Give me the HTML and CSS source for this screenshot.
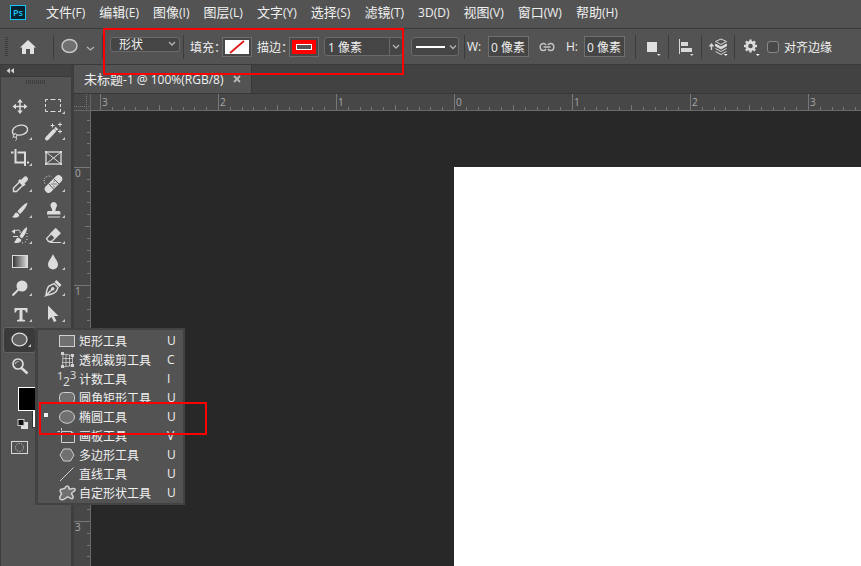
FILE: index.html
```html
<!DOCTYPE html>
<html lang="zh-CN">
<head>
    <meta charset="UTF-8">
    <meta name="viewport" content="width=device-width, initial-scale=1.0">
    <title>未标题-1</title>
    <link rel="stylesheet" href="styles.css">
</head>
<body>
    <nav class="menubar">
        <svg class="logo" width="16" height="15" viewBox="0 0 16 15">
            <rect x="0.5" y="0.5" width="15" height="14" fill="#06232f" stroke="#18c4f4"/>
            <text x="3" y="11" class="logo-text">Ps</text>
        </svg>
        <a href="#">文件<span class="key">(F)</span></a>
        <a href="#">编辑<span class="key">(E)</span></a>
        <a href="#">图像<span class="key">(I)</span></a>
        <a href="#">图层<span class="key">(L)</span></a>
        <a href="#">文字<span class="key">(Y)</span></a>
        <a href="#">选择<span class="key">(S)</span></a>
        <a href="#">滤镜<span class="key">(T)</span></a>
        <a href="#"><span class="key">3D(D)</span></a>
        <a href="#">视图<span class="key">(V)</span></a>
        <a href="#">窗口<span class="key">(W)</span></a>
        <a href="#">帮助<span class="key">(H)</span></a>
    </nav>

    <div class="options">
        <div class="seg seg-home">
            <span class="grip"></span>
            <button class="icon-btn" aria-label="主页">
                <svg width="18" height="16" viewBox="0 0 18 16"><path d="M9 1L17 8.5H15V15H11V10H7V15H3V8.5H1Z" fill="#e0e0e0"/></svg>
            </button>
        </div>
        <div class="seg seg-shape">
            <button class="icon-btn" aria-label="椭圆工具">
                <svg width="34" height="18" viewBox="0 0 34 18" fill="none">
                    <ellipse cx="8.500" cy="8" rx="7.5" ry="6.5" fill="#707070" stroke="#c8c8c8" stroke-width="1.4"/>
                    <path d="M26 9L29.500 12L33 9" stroke="#b4b4b4" stroke-width="1.3"/>
                </svg>
            </button>
        </div>
        <div class="seg seg-mode">
            <div class="drop">
                <select class="mode" aria-label="模式"><option>形状</option></select>
                <svg class="chev" width="8" height="6" viewBox="0 0 8 6"><path d="M1 1L4 4L7 1"/></svg>
            </div>
        </div>
        <div class="seg seg-paint">
            <span class="label">填充：</span>
            <button class="swatch" aria-label="填充">
                <svg width="24" height="14" viewBox="0 0 24 14"><rect width="24" height="14" fill="#fff"/><path d="M5 13L19 1" stroke="#e01818" stroke-width="1.8"/></svg>
            </button>
            <span class="label">描边：</span>
            <button class="swatch" aria-label="描边">
                <svg width="24" height="14" viewBox="0 0 24 14"><rect width="24" height="14" fill="#f00"/><rect x="4.500" y="4.500" width="15" height="5" fill="#535353" stroke="#fff"/></svg>
            </button>
            <div class="combo">
                <input type="text" value="1 像素" aria-label="描边宽度">
                <button aria-label="展开"><svg class="chev" width="8" height="6" viewBox="0 0 8 6"><path d="M1 1L4 4L7 1"/></svg></button>
            </div>
            <button class="stroke-type" aria-label="描边类型">
                <svg width="42" height="10" viewBox="0 0 42 10" fill="none"><path d="M0 5H29" stroke="#fff" stroke-width="2"/><path d="M34 3.500L37 6.500L40 3.500" stroke="#b4b4b4" stroke-width="1.3"/></svg>
            </button>
        </div>
        <div class="seg seg-size">
            <label for="w">W:</label>
            <input class="num" id="w" type="text" value="0 像素">
            <button class="icon-btn link" aria-label="链接">
                <svg width="16" height="10" viewBox="0 0 16 10" fill="none" stroke="#c4c4c4" stroke-width="1.5"><path d="M7 3C6 1.500 5.500 1.500 4.500 1.500C2.500 1.500 1.200 3 1.200 5S2.500 8.500 4.500 8.500C5.500 8.500 6 8.500 7 7"/><path d="M9 3C10 1.500 10.500 1.500 11.500 1.500C13.500 1.500 14.800 3 14.800 5S13.500 8.500 11.500 8.500C10.500 8.500 10 8.500 9 7"/><path d="M4.500 5H11.500"/></svg>
            </button>
            <label for="h">H:</label>
            <input class="num" id="h" type="text" value="0 像素">
        </div>
        <div class="seg seg-icon">
            <button class="icon-btn" aria-label="路径操作">
                <svg width="20" height="20" viewBox="0 0 20 20"><path d="M5 5H15V15H5ZM15 17H18.600L16.800 19Z" fill="#e0e0e0"/></svg>
            </button>
        </div>
        <div class="seg seg-icon">
            <button class="icon-btn" aria-label="对齐">
                <svg width="20" height="20" viewBox="0 0 20 20"><path d="M4 2H5V17H4ZM6 5H13V9H6ZM6 11H17V15H6ZM15 17H18.600L16.800 19Z" fill="#d8d8d8"/></svg>
            </button>
        </div>
        <div class="seg seg-icon">
            <button class="icon-btn" aria-label="排列">
                <svg width="22" height="20" viewBox="0 0 22 20" fill="none" stroke="#d8d8d8"><path d="M4.500 13V8M2.500 9.500L4.500 7L6.500 9.500" stroke-width="1.3"/><path d="M14 2L19.500 4.500L14 7.500L8.500 4.500Z"/><path d="M8.500 7L14 10L19.500 7V9L14 12L8.500 9Z" fill="#e0e0e0"/><path d="M8.500 11.500L14 14.500L19.500 11.500M8.500 14.500L14 17.500L19.500 14.500"/><path d="M17 17H20.600L18.800 19Z" fill="#fff" stroke="none"/></svg>
            </button>
        </div>
        <div class="seg seg-end">
            <button class="icon-btn" aria-label="设置">
                <svg width="20" height="20" viewBox="0 0 20 20" fill="none" stroke="#dcdcdc"><circle cx="8.500" cy="9" r="3.600" stroke-width="2.600"/><path d="M8.500 2.500V5M8.500 13V15.500M2 9H4.500M12.500 9H15M3.900 4.400L5.700 6.200M11.300 11.800L13.100 13.600M13.100 4.400L11.300 6.200M5.700 11.800L3.900 13.600" stroke-width="2.400"/><path d="M14 17H17.600L15.800 19Z" fill="#fff" stroke="none"/></svg>
            </button>
            <input class="check" id="align" type="checkbox">
            <label class="check-label" for="align">对齐边缘</label>
        </div>
        <div class="mark mark-options"></div>
    </div>

    <div class="workspace">
        <aside class="toolbox">
            <div class="collapse">
                <svg width="9" height="6" viewBox="0 0 9 6" fill="#d0d0d0"><path d="M4 0V5.600L0.500 2.800ZM8 0V5.600L4.500 2.800Z"/></svg>
            </div>
            <div class="tool-grip"></div>
            <div class="tools">
                <button class="tool single" aria-label="移动">
                    <svg viewBox="0 0 20 20"><path d="M10 4V17M4 10.500H16" stroke-width="1.500"/><path class="f" d="M10 3L12.800 6.500H7.200ZM10 18L12.800 14.500H7.200ZM2.500 10.500L6 7.700V13.300ZM17.500 10.500L14 7.700V13.300Z"/></svg>
                </button>
                <button class="tool" aria-label="选框">
                    <svg viewBox="0 0 20 20"><path d="M2.500 6V3.500H5M7.500 3.500H12.500M15 3.500H17.500V6M17.500 8V11M17.500 13V15.500H15M12.500 15.500H7.500M5 15.500H2.500V13M2.500 11V8"/></svg>
                </button>
                <button class="tool" aria-label="套索">
                    <svg viewBox="0 0 20 20"><path d="M4.500 13C1 11 2 6 7 4C12 2 17 3.500 17.500 7C18 11 12 14 6.500 13" stroke-width="1.300"/><circle cx="5" cy="13.500" r="1.800"/><path d="M6 15C7.500 16.500 6.500 17.500 5.500 18.500M4 14.500L2.500 15.500"/></svg>
                </button>
                <button class="tool" aria-label="魔棒">
                    <svg viewBox="0 0 20 20"><path d="M4 16.500L11 9" stroke-width="4" stroke-linecap="round"/><path d="M12.500 7.500L14 6" stroke-width="3.500"/><path d="M9.500 1.500V5.500M7.500 3.500H11.500M17 0.500V4.500M15 2.500H19M17 7.500V11.500M15 9.500H19"/></svg>
                </button>
                <button class="tool" aria-label="裁剪">
                    <svg viewBox="0 0 20 20"><path d="M5.500 1V14.500H15M1 4.500H3.500M7.500 4.500H15V18M17 14.500H19" stroke-width="2"/></svg>
                </button>
                <button class="tool single" aria-label="图框">
                    <svg viewBox="0 0 20 20"><rect x="3" y="4" width="15" height="12" stroke-width="1.300"/><path d="M3 4L18 16M18 4L3 16"/><path class="f" d="M2 3H4V5H2ZM17 3H19V5H17ZM2 15H4V17H2ZM17 15H19V17H17Z"/></svg>
                </button>
                <button class="tool" aria-label="吸管">
                    <svg viewBox="0 0 20 20"><path d="M10 7.500L3.500 14V17.500H6.500L13 11" stroke-width="1.400"/><path d="M9 6L14.500 11.500" stroke-width="3"/><path d="M12.500 8L15.500 5" stroke-width="5" stroke-linecap="round"/></svg>
                </button>
                <button class="tool" aria-label="修复画笔">
                    <svg viewBox="0 0 20 20"><path d="M5.500 15L15.500 5" stroke-width="7.500" stroke-linecap="round"/><path d="M5.500 9.500L11 15.500M10.500 4.500L16.500 10.500" stroke="#535353"/><path d="M10.500 7.500H11.500M8.500 10H9.500M10.500 10H11.500M12.500 10H13.500M10.500 12.500H11.500" stroke="#535353" stroke-width="1.500"/><path d="M2 9.500C-1 5 4 0.500 8.500 2.500" stroke-dasharray="1 1.500"/></svg>
                </button>
                <button class="tool" aria-label="画笔">
                    <svg viewBox="0 0 20 20"><path class="f" d="M17.500 2.500C14 4 9.500 8.500 7.500 11.500L10 14C13 11.500 17 6.500 17.500 2.500ZM6.800 12.500C4 12.500 4.500 16 2 17C5 18.500 9.500 17.500 9.300 14.800Z"/></svg>
                </button>
                <button class="tool" aria-label="仿制图章">
                    <svg viewBox="0 0 20 20"><path class="f" d="M10.500 2A3.500 3.500 0 0 1 13 8L12.300 11H16C17.500 11 17.500 12.500 17.500 14.500H4C4 12.500 4 11 5.500 11H9.300L8.500 8A3.500 3.500 0 0 1 10.500 2ZM5 16.500H17V17.500H5Z"/></svg>
                </button>
                <button class="tool" aria-label="历史记录画笔">
                    <svg viewBox="0 0 20 20"><path class="f" d="M17 1C13.500 3 11 7 9.500 10.500L12 12.500C14.500 9.500 17.500 5 17 1ZM8.500 11.500C6 11.500 6 15 4 16.500C7 18 11.500 16.500 11.300 13.800ZM1.500 5.500L5 3V8Z"/><path d="M4 5.500C8 3 11 4 10 7M3 10.500H8"/><path d="M17 7V13C17 16 14 17 11 17" stroke-dasharray="1 2"/></svg>
                </button>
                <button class="tool" aria-label="橡皮擦">
                    <svg viewBox="0 0 20 20"><path class="f" d="M12.500 2L17.500 7L12 12.500L7 7.500Z"/><path d="M12.500 2.700L17 7.200L8.500 15.500H5.500L3.500 12.500L8 8" stroke-width="1.300"/><path d="M7 16.500H18"/></svg>
                </button>
                <button class="tool" aria-label="渐变">
                    <svg viewBox="0 0 20 20">
                        <defs><linearGradient id="grad"><stop offset="0" stop-color="#333"/><stop offset="1" stop-color="#e0e0e0"/></linearGradient></defs>
                        <rect x="2.500" y="3.500" width="15" height="12" fill="url(#grad)"/>
                    </svg>
                </button>
                <button class="tool" aria-label="模糊">
                    <svg viewBox="0 0 20 20"><path class="f" d="M10 2C11.500 6 15 9 15 12.500A5 5 0 0 1 5 12.500C5 9 8.500 6 10 2Z"/></svg>
                </button>
                <button class="tool" aria-label="减淡">
                    <svg viewBox="0 0 20 20"><circle class="f" cx="12" cy="8" r="5.500"/><path d="M8.500 11.500L2.500 17.500" stroke-width="2"/></svg>
                </button>
                <button class="tool" aria-label="钢笔">
                    <svg viewBox="0 0 20 20"><path d="M3 17.500C3.500 14 3.500 10.500 6 8L11 5.500L15 9.500L13.500 13C11 16 7 16.500 3 17.500L9.500 11" stroke-width="1.400"/><path class="f" d="M11.500 4L13.500 2L18.500 7L16.500 9ZM9.800 9A1.700 1.700 0 1 1 9.700 9Z"/></svg>
                </button>
                <button class="tool" aria-label="文字">
                    <svg viewBox="0 0 20 20"><path class="f" d="M4.500 4H17.500V8.500H16C15.700 6.500 15 6 12.500 6V15.500L15 16V17.500H7V16L9.500 15.500V6C7 6 6.300 6.500 6 8.500H4.500Z"/></svg>
                </button>
                <button class="tool" aria-label="路径选择">
                    <svg viewBox="0 0 20 20"><path class="f" d="M5 1.500L15.500 12H11L13.500 17L11 18L8.500 13L5 16Z"/></svg>
                </button>
                <button class="tool active" aria-label="椭圆">
                    <svg viewBox="0 0 20 20"><ellipse cx="9.500" cy="9.500" rx="7.500" ry="6.300" fill="#606060" stroke-width="1.300"/></svg>
                </button>
                <span></span>
                <button class="tool single" aria-label="缩放">
                    <svg viewBox="0 0 20 20"><circle cx="8" cy="8" r="5" stroke-width="1.700"/><path d="M5.500 8C5.500 6 7 5.500 8.500 5.500"/><path d="M11.500 12L17.500 17.500" stroke-width="2.600"/></svg>
                </button>
            </div>
            <div class="colors">
                <svg width="50" height="44" viewBox="0 0 50 44">
                    <rect x="14.500" y="14.500" width="26" height="26" fill="#fff" stroke="#333"/>
                    <rect x="0.500" y="0.500" width="25" height="23" fill="#000" stroke="#fff"/>
                    <path d="M3 35H10V42H3Z" fill="#e0e0e0"/>
                    <rect x="0" y="32.500" width="6" height="6" fill="#111" stroke="#ccc"/>
                </svg>
            </div>
            <button class="quick-mask" aria-label="快速蒙版">
                <svg width="17" height="13" viewBox="0 0 17 13" fill="none" stroke="#d8d8d8"><rect x="0.500" y="0.500" width="16" height="12"/><circle cx="8.500" cy="6.500" r="4" stroke-dasharray="1 1.500"/></svg>
            </button>

            <!-- shape tool flyout -->
            <ul class="flyout">
                <li><button><svg viewBox="0 0 18 16"><rect x="1.500" y="2.500" width="15" height="11"/></svg><span>矩形工具</span><kbd>U</kbd></button></li>
                <li><button><svg viewBox="0 0 18 16"><path d="M5 2L14.500 3.500V13.500L4.500 15ZM8 2.500V14.500M11.500 3V14M5 6.500H14.500M4.500 10.500H14.500" fill="none" stroke-width="0.800"/><path class="f" d="M3 0H6V3H3ZM13 2H16V5H13ZM13 12H16V15H13ZM3 13H6V16H3Z"/></svg><span>透视裁剪工具</span><kbd>C</kbd></button></li>
                <li><button><svg viewBox="0 0 18 16"><text x="-1" y="9" font-size="11">1</text><text x="5" y="15" font-size="12">2</text><text x="12" y="8" font-size="11">3</text></svg><span>计数工具</span><kbd>I</kbd></button></li>
                <li><button><svg viewBox="0 0 18 16"><rect x="1.500" y="2.500" width="15" height="11" rx="4"/></svg><span>圆角矩形工具</span><kbd>U</kbd></button></li>
                <li class="current"><button><svg viewBox="0 0 18 16"><ellipse cx="9" cy="8" rx="7.500" ry="6.300"/></svg><span>椭圆工具</span><kbd>U</kbd></button></li>
                <li><button><svg viewBox="0 0 18 16"><path d="M3.500 3.500H13.500L16.500 6V14.500H3.500ZM13.500 3.500V6H16.500" fill="none"/><path d="M-0.500 3.500H2M3.500 0V2.500"/></svg><span>画板工具</span><kbd>V</kbd></button></li>
                <li><button><svg viewBox="0 0 18 16"><path d="M5.500 2H12.500L16 8L12.500 14H5.500L2 8Z"/></svg><span>多边形工具</span><kbd>U</kbd></button></li>
                <li><button><svg viewBox="0 0 18 16"><path d="M2 15L15.500 1.500"/></svg><span>直线工具</span><kbd>U</kbd></button></li>
                <li><button><svg viewBox="0 0 18 16"><path d="M8 1.500C9.500 0.500 11.500 1.500 11 4C12 5 16 2 17 4C18 6.500 13.500 7 13.500 8.500C14 10 16.500 12 14.500 13.500C12.500 14.500 11 11.500 9.500 12C8 12.500 6 15.500 3 14.500C-0.500 13 3.500 10 3.500 8.500C3 7.500 1 6.500 2.500 4.500C4 3 6.500 5.500 8 1.500Z" stroke-width="1.500"/></svg><span>自定形状工具</span><kbd>U</kbd></button></li>
            </ul>
            <div class="mark mark-tool"></div>
        </aside>

        <main class="document">
            <div class="tabs">
                <div class="tab"><span>未标题<span class="key">-1 @ 100%(RGB/8)</span></span><button aria-label="关闭"><svg width="8" height="8" viewBox="0 0 8 8"><path d="M1 1L7 7M7 1L1 7" stroke="#b8b8b8" stroke-width="1.800"/></svg></button></div>
            </div>
            <div class="corner"></div>
            <div class="ruler-h">
                <svg width="100%" height="17">
                    <defs>
                        <pattern id="ticks-h" x="9" width="118" height="17" patternUnits="userSpaceOnUse">
                            <path d="M0.500 0V16M12.500 13V16M24.500 13V16M35.500 13V16M47.500 13V16M59.500 11V16M71.500 13V16M83.500 13V16M94.500 13V16M106.500 13V16" stroke="#777"/>
                        </pattern>
                    </defs>
                    <rect width="100%" height="17" fill="url(#ticks-h)"/>
                    <text x="11" y="12">3</text>
                    <text x="129" y="12">2</text>
                    <text x="247" y="12">1</text>
                    <text x="365" y="12">0</text>
                    <text x="483" y="12">1</text>
                    <text x="601" y="12">2</text>
                    <text x="719" y="12">3</text>
                </svg>
            </div>
            <div class="ruler-v">
                <svg width="17" height="100%">
                    <defs>
                        <pattern id="ticks-v" y="56" width="17" height="118" patternUnits="userSpaceOnUse">
                            <path d="M0 0.500H16M13 12.500H16M13 24.500H16M13 35.500H16M13 47.500H16M11 59.500H16M13 71.500H16M13 83.500H16M13 94.500H16M13 106.500H16" stroke="#777"/>
                        </pattern>
                    </defs>
                    <rect width="17" height="100%" fill="url(#ticks-v)"/>
                    <text x="1" y="66">0</text>
                    <text x="1" y="184">1</text>
                    <text x="1" y="302">2</text>
                    <text x="1" y="420">3</text>
                </svg>
            </div>
            <div class="stage"><div class="artboard"></div></div>
        </main>
    </div>
</body>
</html>
```
FILE: styles.css
```css
* {
    box-sizing: border-box;
}
body {
    margin: 0;
    height: 100vh;
    display: flex;
    flex-direction: column;
    overflow: hidden;
    background: #535353;
    color: #f0f0f0;
    font-family: "Open Sans", "Noto Sans CJK SC", sans-serif;
    font-size: 12px;
}
button, input, select {
    font: inherit;
    color: inherit;
    margin: 0;
    padding: 0;
    border: 0;
    background: none;
}
svg {
    display: block;
    flex: none;
}
.key {
    font-size: 12px;
}

/* menu bar */
.menubar {
    display: flex;
    align-items: center;
    gap: 14px;
    height: 29px;
    padding: 0 10px 4px;
    border-bottom: 1px solid #3a3a3a;
    font-size: 13px;
    line-height: 18px;
}
.menubar a {
    color: #f0f0f0;
    text-decoration: none;
    white-space: nowrap;
}
.logo {
    margin-right: 6px;
}
.logo-text {
    fill: #18c4f4;
    font-size: 9px;
    font-weight: 600;
}

/* options bar */
.options {
    position: relative;
    display: flex;
    align-items: center;
    height: 36px;
    border-bottom: 1px solid #3a3a3a;
    white-space: nowrap;
}
.seg {
    display: flex;
    flex: none;
    align-items: center;
    height: 24px;
    border-right: 1px solid #3c3c3c;
}
.seg-home { width: 54px; gap: 11px; padding-left: 5px; }
.seg-shape { width: 49px; padding-left: 7px; }
.seg-mode { width: 81px; padding-left: 7px; }
.seg-paint { width: 281px; padding-left: 6px; }
.seg-size { width: 171px; padding-left: 2px; }
.seg-icon { width: 33px; justify-content: center; }
.seg-end { padding-left: 7px; border-right: 0; }
.grip {
    width: 3px;
    height: 20px;
    background: repeating-linear-gradient(#3e3e3e 0 1px, #535353 1px 2px);
}
.drop {
    position: relative;
}
.mode {
    appearance: none;
    width: 70px;
    height: 15px;
    padding-left: 8px;
    border: 1px solid #6a6a6a;
    border-radius: 3px;
    background: #454545;
    line-height: 13px;
    margin-bottom: 5px;
}
.chev {
    fill: none;
    stroke: #b4b4b4;
    stroke-width: 1.3;
}
.drop .chev {
    position: absolute;
    right: 4px;
    top: 5px;
}
.label {
    width: 32px;
}
.swatch {
    padding: 2px;
    border: 1px solid #6e6e6e;
    background: #474747;
    margin-right: 5px;
}
.combo {
    display: flex;
    width: 79px;
    height: 19px;
    margin-right: 8px;
    border: 1px solid #6a6a6a;
    border-radius: 3px;
    background: #454545;
}
.combo input {
    width: 65px;
    padding-left: 3px;
    border-right: 1px solid #6a6a6a;
}
.combo button {
    padding: 0 2px;
}
.stroke-type {
    height: 19px;
    width: 48px;
    padding-left: 4px;
    border: 1px solid #6a6a6a;
    border-radius: 3px;
    background: #454545;
}
.seg-size label {
    width: 21px;
}
.num {
    flex: none;
    width: 41px;
    height: 21px;
    padding-left: 2px;
    border: 1px solid #707070;
    background: #454545;
}
.link {
    margin: 0 11px 0 10px;
}
.seg-size label[for="h"] {
    width: 18px;
}
.check {
    appearance: none;
    width: 12px;
    height: 12px;
    margin-left: 5px;
    border: 1px solid #888;
    border-radius: 3px;
    background: #484848;
}
.check-label {
    margin-left: 5px;
}
.mark {
    position: absolute;
    border: 2px solid #f00;
    pointer-events: none;
}
.mark-options {
    left: 103px;
    top: -1px;
    width: 301px;
    height: 47px;
    z-index: 3;
}

/* toolbox */
.workspace {
    display: flex;
    flex: 1;
    min-height: 0;
}
.toolbox {
    position: relative;
    flex: none;
    width: 74px;
    border-left: 1px solid #3e3e3e;
    border-right: 3px solid #3e3e3e;
}
.collapse {
    height: 12px;
    padding: 3px 5px;
    background: #424242;
    border-bottom: 1px solid #3a3a3a;
}
.tool-grip {
    width: 19px;
    height: 4px;
    margin: 3px 0 9px 25px;
    background: repeating-linear-gradient(90deg, #3e3e3e 0 1px, #535353 1px 2px);
}
.tools {
    display: grid;
    grid-template-columns: 33px 33px;
    grid-auto-rows: 26px;
    padding-left: 2px;
}
.tool {
    position: relative;
    display: flex;
    align-items: center;
    justify-content: center;
}
.tool svg {
    width: 20px;
    height: 20px;
    fill: none;
    stroke: #dcdcdc;
}
.tool .f {
    fill: #dcdcdc;
    stroke: none;
}
.tool::after {
    content: "";
    position: absolute;
    right: 4px;
    bottom: 5px;
    border-left: 3px solid transparent;
    border-bottom: 3px solid #c8c8c8;
}
.tool.single::after {
    display: none;
}
.tool.active {
    background: #3a3a3a;
    border: 1px solid #646464;
    border-radius: 3px;
}
.colors {
    margin: 8px 0 0 17px;
}
.colors svg {
    overflow: visible;
}
.quick-mask {
    display: block;
    margin: 10px 0 0 10px;
}

/* flyout */
.flyout {
    position: absolute;
    z-index: 2;
    left: 34px;
    top: 263px;
    width: 150px;
    margin: 0;
    padding: 1px 0;
    list-style: none;
    border: 2px solid #424242;
    border-left-width: 3px;
    background: #535353;
}
.flyout li {
    position: relative;
}
.flyout button {
    display: flex;
    align-items: center;
    width: 100%;
    height: 19px;
    padding-left: 20px;
    text-align: left;
}
.flyout svg {
    width: 18px;
    height: 16px;
    margin-right: 3px;
    overflow: visible;
    fill: #707070;
    stroke: #d0d0d0;
}
.flyout svg .f {
    fill: #d0d0d0;
    stroke: none;
}
.flyout svg text {
    fill: #e0e0e0;
    stroke: none;
}
.flyout span {
    flex: 1;
    white-space: nowrap;
}
.flyout kbd {
    width: 16px;
    font: inherit;
}
.flyout .current::before {
    content: "";
    position: absolute;
    left: 6px;
    top: 6px;
    width: 4px;
    height: 4px;
    background: #f0f0f0;
}
.mark-tool {
    left: 38px;
    top: 337px;
    width: 168px;
    height: 33px;
    z-index: 3;
}

/* document window */
.document {
    flex: 1;
    min-width: 0;
    display: grid;
    grid-template-columns: 17px 1fr;
    grid-template-rows: 29px 17px 1fr;
    background: #474747;
}
.document text {
    fill: #a8a8a8;
    font-size: 10px;
}
.tabs {
    grid-column: 1 / 3;
    display: flex;
    background: #424242;
    border-bottom: 1px solid #383838;
}
.tab {
    display: flex;
    align-items: center;
    gap: 10px;
    padding: 0 10px;
    background: #535353;
    border-right: 1px solid #383838;
    font-size: 13px;
    line-height: 18px;
}
.corner {
    border-right: 1px solid #666;
    border-bottom: 1px solid #666;
    background:
        repeating-linear-gradient(90deg, #777 0 1px, transparent 1px 2px) 0 12px / 100% 1px no-repeat,
        repeating-linear-gradient(#777 0 1px, transparent 1px 2px) 12px 0 / 1px 100% no-repeat;
}
.ruler-h {
    border-bottom: 1px solid #6a6a6a;
    overflow: hidden;
}
.ruler-v {
    border-right: 1px solid #6a6a6a;
    overflow: hidden;
}
.stage {
    display: flex;
    padding: 56px 0 0 363px;
    background: #282828;
}
.artboard {
    flex: 1;
    background: #fff;
}
```
